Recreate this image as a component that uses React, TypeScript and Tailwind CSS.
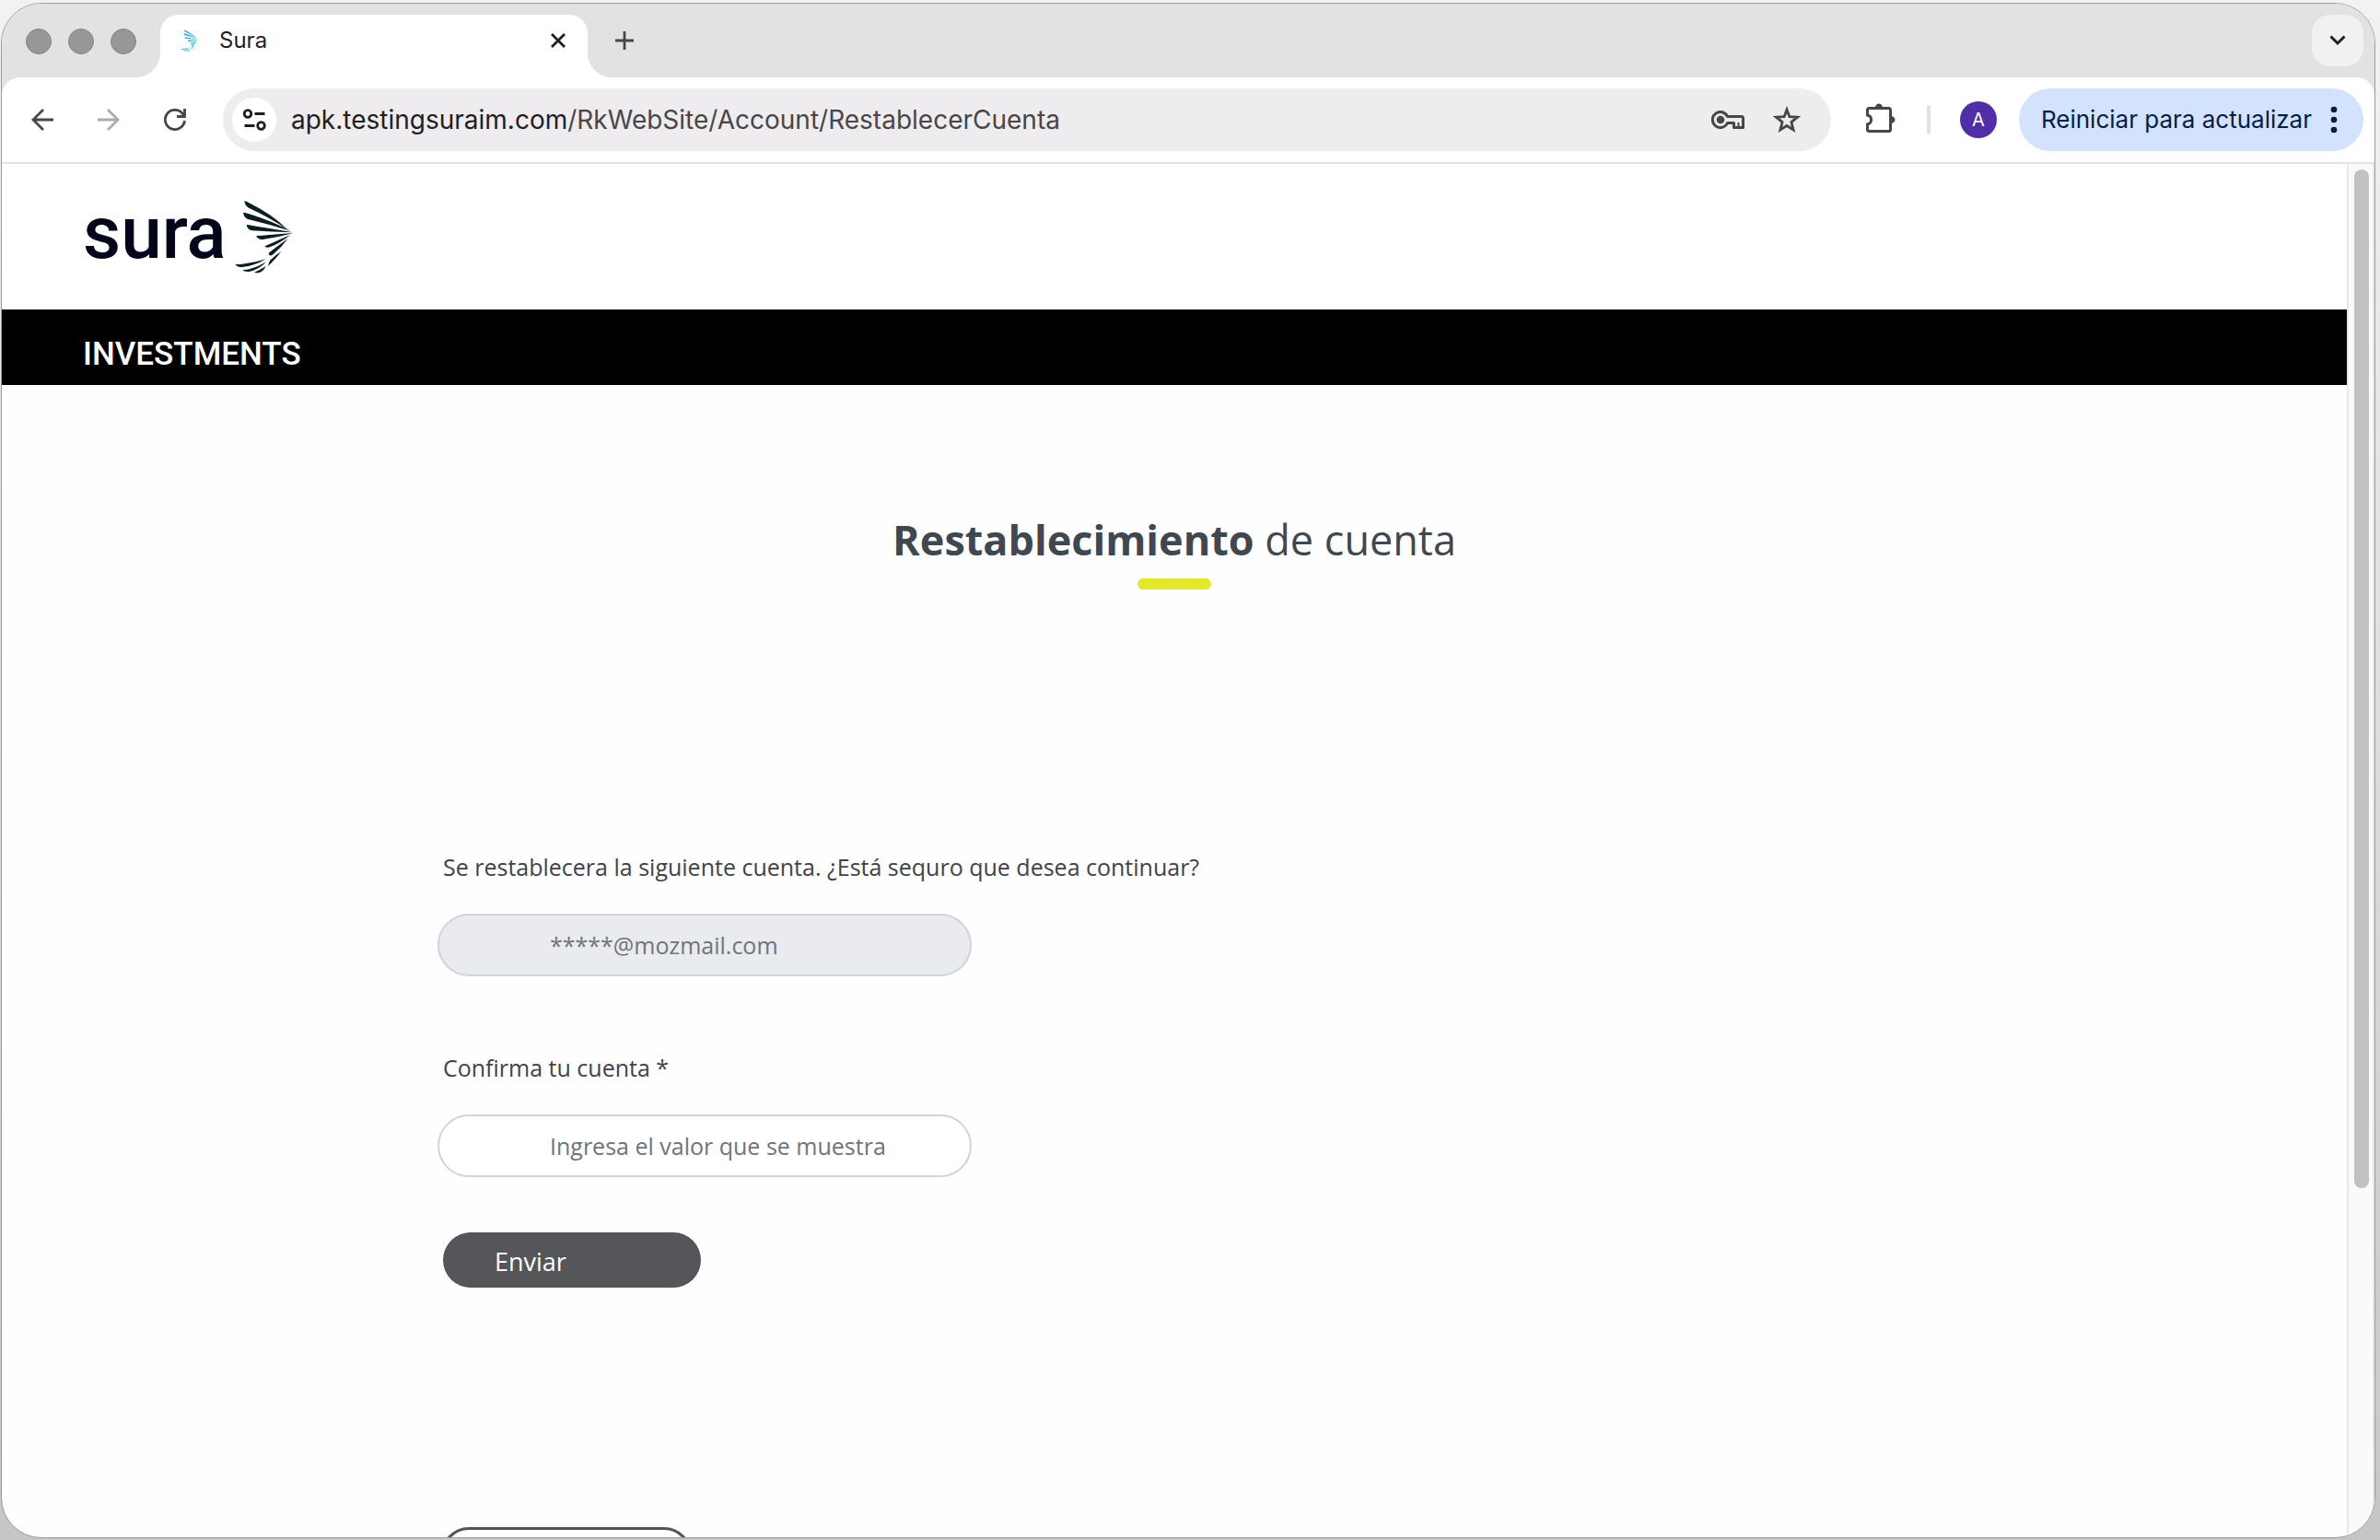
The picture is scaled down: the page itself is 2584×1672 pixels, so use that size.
import type { ReactNode } from "react";

function Wing({ className, fill }: { className: string; fill: string }) {
  return (
    <svg viewBox="580 110 195 240" className={className} fill={fill} aria-hidden="true">
      <path d="M614 114 Q622 115 632 121 Q705 157 754 206 Q692 165 628 136 Q616 130 614 114Z" />
      <path d="M610 151 Q618 151 630 156 Q706 180 764 211 Q700 191 626 173 Q612 168 610 151Z" />
      <path d="M621 191 Q628 191 640 194 Q705 204 772 216 Q705 214 638 210 Q623 207 621 191Z" />
      <path d="M652 227 Q660 226 672 226 Q722 222 772 218 Q725 232 674 239 Q659 241 652 227Z" />
      <path d="M680 261 Q690 256 698 253 Q732 238 764 224 Q732 250 697 264 Q684 267 680 261Z" />
      <path d="M693 283 Q703 276 710 270 Q734 252 756 236 Q734 266 706 289 Q694 296 693 283Z" />
      <path d="M691 326 Q692 315 699 306 Q714 290 734 278 Q718 300 691 326Z" />
      <path d="M584 319 Q600 321 615 318 Q650 314 684 303 Q648 325 606 329 Q590 329 584 319Z" />
      <path d="M608 338 Q622 338 632 335 Q660 328 685 312 Q662 338 628 344 Q614 345 608 338Z" />
      <path d="M646 346 Q662 340 684 326 Q674 348 656 348 Q650 348 646 346Z" />
    </svg>
  );
}

function IconButton({ label, children }: { label: string; children: ReactNode }) {
  return (
    <button aria-label={label} className="flex size-12 shrink-0 items-center justify-center rounded-full">
      {children}
    </button>
  );
}

function TabStrip() {
  return (
    <div className="flex h-20 shrink-0 items-end bg-[#e2e2e2] pr-3 pl-[26px]">
      <div className="flex h-20 items-center gap-[18px] pt-0.5">
        {["Cerrar ventana", "Minimizar", "Maximizar"].map((l) => (
          <button key={l} aria-label={l} className="size-7 rounded-full border border-[#858585] bg-[#979797]" />
        ))}
      </div>
      <svg viewBox="0 0 26 26" className="h-[26px] w-[26px] shrink-0" fill="#fff" aria-hidden="true">
        <path d="M26 0V26H0C14 26 26 14 26 0Z" />
      </svg>
      <div className="flex h-[68px] w-[464px] items-center rounded-t-[20px] bg-white pr-5 pb-3 pl-[22px]">
        <Wing className="h-6 w-5" fill="#1fb5cc" />
        <span className="flex-1 pl-[22px] text-2xl leading-8 text-[#1f1f1f]">Sura</span>
        <button aria-label="Cerrar pestaña" className="flex size-6 items-center justify-center">
          <svg viewBox="0 0 16 16" className="size-4" fill="none" stroke="#1f1f1f" strokeWidth="2.8" aria-hidden="true">
            <path d="M1 1L15 15M15 1L1 15" />
          </svg>
        </button>
      </div>
      <svg viewBox="0 0 26 26" className="h-[26px] w-[26px] shrink-0" fill="#fff" aria-hidden="true">
        <path d="M0 0V26H26C12 26 0 14 0 0Z" />
      </svg>
      <button aria-label="Nueva pestaña" className="mb-[30px] flex h-10 w-7 items-end justify-center">
        <svg viewBox="0 0 20 20" className="size-5" fill="none" stroke="#474747" strokeWidth="2.8" aria-hidden="true">
          <path d="M10 0V20M0 10H20" />
        </svg>
      </button>
      <button aria-label="Buscar pestañas" className="mb-3 ml-auto flex size-14 items-center justify-center rounded-[20px] bg-[#f1f1f1]">
        <svg viewBox="0 0 18 12" className="h-3 w-[18px]" fill="none" stroke="#1f1f1f" strokeWidth="3" aria-hidden="true">
          <path d="M1.500 1.500L9 9L16.500 1.500" />
        </svg>
      </button>
    </div>
  );
}

function Toolbar() {
  return (
    <div className="shrink-0 bg-[#e2e2e2]">
      <div className="flex h-[94px] items-center rounded-t-[20px] border-b-2 border-[#e2e2e2] bg-white pr-3 pl-5">
        <div className="flex gap-6">
          <IconButton label="Atrás">
            <svg viewBox="0 0 24 24" className="size-6" fill="none" stroke="#474747" strokeWidth="2.8" aria-hidden="true">
              <path d="M24 12H2M13 1L2 12L13 23" />
            </svg>
          </IconButton>
          <IconButton label="Adelante">
            <svg viewBox="0 0 24 24" className="size-6" fill="none" stroke="#ababab" strokeWidth="2.8" aria-hidden="true">
              <path d="M0 12H22M11 1L22 12L11 23" />
            </svg>
          </IconButton>
          <IconButton label="Recargar">
            <svg viewBox="0 0 24 24" className="size-6" fill="none" stroke="#474747" strokeWidth="2.8" aria-hidden="true">
              <path d="M22.500 13A10.600 10.600 0 1 1 20 5L22.500 8" />
              <path d="M22.500 0V8.500H14" />
            </svg>
          </IconButton>
        </div>
        <div className="ml-7 flex h-[68px] flex-1 items-center rounded-full bg-[#eeecee] pr-6 pl-2.5">
          <button aria-label="Información del sitio" className="flex size-12 shrink-0 items-center justify-center rounded-full bg-white">
            <svg viewBox="0 0 26 24" className="h-6 w-[26px]" fill="none" stroke="#1f1f1f" strokeWidth="2.8" aria-hidden="true">
              <circle cx="6" cy="5.500" r="3.800" />
              <path d="M13.500 5.500H24.500M2.500 18.500H13.500" />
              <circle cx="20.500" cy="18.500" r="3.800" />
            </svg>
          </button>
          <p className="flex-1 pl-4 text-[28px] leading-9 text-[#474747]">
            <span className="text-[#1f1f1f]">apk.testingsuraim.com</span>/RkWebSite/Account/RestablecerCuenta
          </p>
          <div className="flex gap-4">
            <IconButton label="Contraseñas">
              <svg viewBox="0 0 36 20" className="h-5 w-9 shrink-0" fill="none" stroke="#474747" strokeWidth="3" aria-hidden="true">
                <path d="M17.500 6.500A8.500 8.500 0 1 0 17.500 13.500H24.500V18.500H34.500V7.500L33.500 6.500Z" strokeLinejoin="round" />
                <circle cx="10" cy="10" r="4.300" fill="#474747" stroke="none" />
                <path d="M29.500 13V18" strokeWidth="2" />
              </svg>
            </IconButton>
            <IconButton label="Agregar a favoritos">
              <svg viewBox="0 0 30 30" className="h-[30px] w-[30px]" fill="none" stroke="#474747" strokeWidth="2.800" aria-hidden="true">
                <path d="M15 4L17.800 11.600L26.500 12.200L19.900 17.600L22.100 26L15 21.500L7.900 26L10.100 17.600L3.500 12.200L12.200 11.600Z" />
              </svg>
            </IconButton>
          </div>
        </div>
        <div className="ml-[30px] flex items-center">
          <IconButton label="Extensiones">
            <svg viewBox="0 0 32 32" className="mb-1 size-8" fill="none" stroke="#474747" strokeWidth="3" aria-hidden="true">
              <path d="M3.500 5.500H24.500Q26.500 5.500 26.500 7.500V28.500Q26.500 30.500 24.500 30.500H3.500Q1.500 30.500 1.500 28.500V23C7 21.500 7 14.500 1.500 13V7.500Q1.500 5.500 3.500 5.500Z" />
              <path d="M10 5A4 4.500 0 0 1 18 5ZM27 14A4.500 4 0 0 1 27 22Z" fill="#474747" stroke="none" />
            </svg>
          </IconButton>
          <div className="ml-[26px] h-8 w-1 rounded-full bg-[#e2e2e2]" />
          <button aria-label="Perfil" className="ml-8 size-10 rounded-full bg-[#512da8] text-center text-xl leading-10 text-white">
            A
          </button>
          <button className="ml-6 flex h-[68px] items-center gap-5 rounded-full bg-[#d3e3fd] pr-7 pl-6 text-[26px] leading-9 text-[#041e49]">
            Reiniciar para actualizar
            <svg viewBox="0 0 8 30" className="h-[30px] w-2" fill="#041e49" aria-hidden="true">
              <circle cx="4" cy="4" r="3.300" />
              <circle cx="4" cy="15" r="3.300" />
              <circle cx="4" cy="26" r="3.300" />
            </svg>
          </button>
        </div>
      </div>
    </div>
  );
}

export default function App() {
  return (
    <div className="flex h-screen flex-col bg-linear-to-b from-[#f2f2f2] to-[#c6c6c6] pt-[3px] pr-[5px] pb-0.5 pl-px font-['Inter',sans-serif]">
      <div className="flex min-h-0 flex-1 flex-col overflow-hidden rounded-[44px] border border-[#9c9c9c] bg-[#fefefe]">
        <TabStrip />
        <Toolbar />
        <div className="flex min-h-0 flex-1">
          <div className="min-w-0 flex-1 overflow-hidden font-['Open_Sans',sans-serif]">
            <header>
              <div className="flex h-[158px] items-center gap-2 bg-white pb-2 pl-[88px]">
                <span className="font-['Roboto',sans-serif] text-[80px] leading-none font-medium text-[#03051a]">sura</span>
                <Wing className="mt-2 h-20 w-[65px]" fill="#0a1f24" />
              </div>
              <p className="bg-black pt-[22px] pb-1.5 pl-[88px] font-['Roboto',sans-serif] text-[35px] leading-[54px] font-medium text-white">
                INVESTMENTS
              </p>
            </header>
            <main>
              <div className="flex flex-col items-center pt-[138px]">
                <h1 className="text-[45px] leading-[60px] text-[#3f474f]">
                  <b>Restablecimiento</b> de cuenta
                </h1>
                <div className="mt-3 h-3 w-20 rounded-full bg-[#e3e829]" />
              </div>
              <form className="mx-auto flex max-w-[1600px] flex-col items-start pt-[282px] text-[25px] leading-[38px] text-[#3f4449]">
                <label htmlFor="cuenta" className="pl-1.5">
                  Se restablecera la siguiente cuenta. ¿Está sequro que desea continuar?
                </label>
                <input
                  id="cuenta"
                  disabled
                  placeholder="*****@mozmail.com"
                  className="mt-8 h-[68px] w-[580px] rounded-full border-2 border-[#ced4da] bg-[#e9ebef] pr-8 pl-[120px] text-[25px] placeholder:text-[#6c757d]"
                />
                <label htmlFor="confirma" className="mt-20 pl-1.5">
                  Confirma tu cuenta *
                </label>
                <input
                  id="confirma"
                  placeholder="Ingresa el valor que se muestra"
                  className="mt-8 h-[68px] w-[580px] rounded-full border-2 border-[#ced4da] bg-white pr-8 pl-[120px] text-[25px] placeholder:text-[#6c757d]"
                />
                <button type="button" className="mt-[60px] ml-1.5 h-[60px] w-[280px] rounded-full bg-[#55565a] pt-1 pl-14 text-left text-[27px] text-white">
                  Enviar
                </button>
                <button type="button" aria-label="Volver" className="mt-[260px] ml-1 h-[60px] w-[272px] rounded-full border-3 border-[#55565a]" />
              </form>
            </main>
          </div>
          <div className="w-[30px] shrink-0 border-x-2 border-[#e8e8e8] bg-[#fafafa] px-1.5 pt-1.5">
            <div className="h-[74.5%] w-4 rounded-full bg-[#c1c1c1]" />
          </div>
        </div>
      </div>
    </div>
  );
}
